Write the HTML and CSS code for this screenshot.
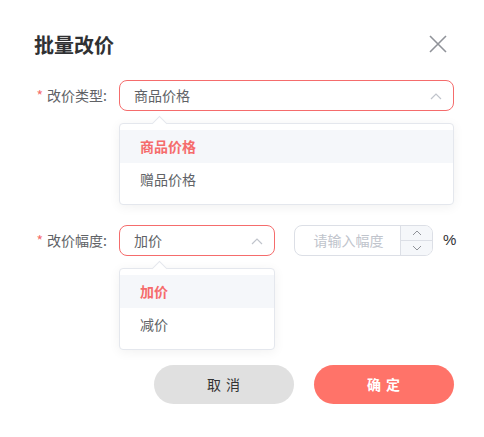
FILE: index.html
```html
<!DOCTYPE html>
<html>
<head>
<meta charset="utf-8">
<title>批量改价</title>
<link rel="stylesheet" href="styles.css">
</head>
<body>
<div class="dialog">
  <div class="dialog_hd">
    <h2 class="dialog_tit">批量改价</h2>
    <span class="dialog_close">
      <svg width="18" height="18" viewBox="0 0 18 18"><path d="M1 1L17 17M17 1L1 17" stroke="#909399" stroke-width="1.6" fill="none"/></svg>
    </span>
  </div>

  <div class="form_row">
    <label class="form_label"><i>*</i> 改价类型:</label>
    <div class="select select_wide">
      <span class="select_val">商品价格</span>
      <svg class="select_arrow" width="12" height="7" viewBox="0 0 12 7"><path d="M1 6L6 1L11 6" stroke="#c0c4cc" stroke-width="1.2" fill="none"/></svg>
    </div>
  </div>
  <div class="drop_wrap">
    <ul class="dropdown dropdown_wide">
      <li class="on">商品价格</li>
      <li>赠品价格</li>
    </ul>
  </div>

  <div class="form_row">
    <label class="form_label"><i>*</i> 改价幅度:</label>
    <div class="select select_small">
      <span class="select_val">加价</span>
      <svg class="select_arrow" width="12" height="7" viewBox="0 0 12 7"><path d="M1 6L6 1L11 6" stroke="#c0c4cc" stroke-width="1.2" fill="none"/></svg>
    </div>
    <div class="num_input">
      <span class="num_ph">请输入幅度</span>
      <div class="num_btns">
        <span class="num_up"><svg width="10" height="6" viewBox="0 0 10 6"><path d="M1 5L5 1L9 5" stroke="#909399" stroke-width="1" fill="none"/></svg></span>
        <span class="num_down"><svg width="10" height="6" viewBox="0 0 10 6"><path d="M1 1L5 5L9 1" stroke="#909399" stroke-width="1" fill="none"/></svg></span>
      </div>
    </div>
    <span class="unit">%</span>
  </div>
  <div class="drop_wrap">
    <ul class="dropdown dropdown_small">
      <li class="on">加价</li>
      <li>减价</li>
    </ul>
  </div>

  <div class="dialog_ft">
    <button class="btn btn_cancel">取 消</button>
    <button class="btn btn_ok">确 定</button>
  </div>
</div>
</body>
</html>
```

FILE: styles.css
```css
* { margin:0; padding:0; box-sizing:border-box;}
body{ font: normal 14px/1.5 "Noto Sans CJK SC", "Noto Sans", sans-serif; background:#fff; color:#606266;}
ul,li{ list-style:none;}

.dialog{ width:484px; padding:30px 30px 0 34px;}
.dialog_hd{ display:flex; justify-content:space-between; align-items:center; height:30px;}
.dialog_tit{ font-size:20px; font-weight:bold; color:#303133; line-height:30px;}
.dialog_close{ display:flex; margin-right:7px; margin-top:-2px;}

.form_row{ display:flex; align-items:center; margin-top:20px; height:31px;}
.form_label{ flex:none; width:85px; padding-right:12px; text-align:right; color:#606266; font-size:14px;}
.form_label i{ font-style:normal; color:#f56c6c; margin-right:1px;}

.select{ position:relative; display:flex; align-items:center; height:31px; border:1px solid #f56c6c; border-radius:8px; padding:0 14px;}
.select_wide{ flex:1;}
.select_small{ flex:none; width:156px;}
.select_val{ color:#606266; font-size:14px;}
.select_arrow{ position:absolute; right:11px; top:12px;}

.drop_wrap{ padding-left:85px; margin-top:12px;}
.dropdown{ position:relative; background:#fff; border:1px solid #e4e7ed; border-radius:4px; padding:6px 0 8px; box-shadow:0 2px 12px rgba(0,0,0,0.06);}
.dropdown:before{ content:""; position:absolute; top:-6px; left:34px; width:10px; height:10px; background:#fff; border-left:1px solid #e4e7ed; border-top:1px solid #e4e7ed; transform:rotate(45deg);}
.dropdown li{ position:relative; height:33px; line-height:33px; padding-left:20px; font-size:14px; color:#606266;}
.dropdown li.on{ background:#f5f7fa; color:#f56c6c; font-weight:bold;}
.dropdown_wide{ width:335px;}
.dropdown_small{ width:156px;}

.num_input{ flex:none; display:flex; width:139px; height:31px; margin-left:19px; border:1px solid #dcdfe6; border-radius:8px; overflow:hidden;}
.num_ph{ flex:1; text-align:center; color:#c0c4cc; font-size:14px; line-height:29px; padding-left:2px;}
.num_btns{ width:32px; display:flex; flex-direction:column; border-left:1px solid #dcdfe6; background:#f5f7fa;}
.num_btns span{ flex:1; display:flex; align-items:center; justify-content:center;}
.num_up{ border-bottom:1px solid #dcdfe6;}
.unit{ margin-left:10px; color:#303133; font-size:15px; font-family:"Liberation Sans", sans-serif;}

.dialog_ft{ display:flex; justify-content:flex-end; gap:20px; margin-top:15px;}
.btn{ width:140px; height:39px; border:none; border-radius:20px; font:bold 14px/39px "Noto Sans CJK SC", sans-serif; letter-spacing:1px; cursor:pointer;}
.btn_cancel{ background:#e0e0e0; color:#333; font-weight:normal;}
.btn_ok{ background:#ff7369; color:#fff;}
```
